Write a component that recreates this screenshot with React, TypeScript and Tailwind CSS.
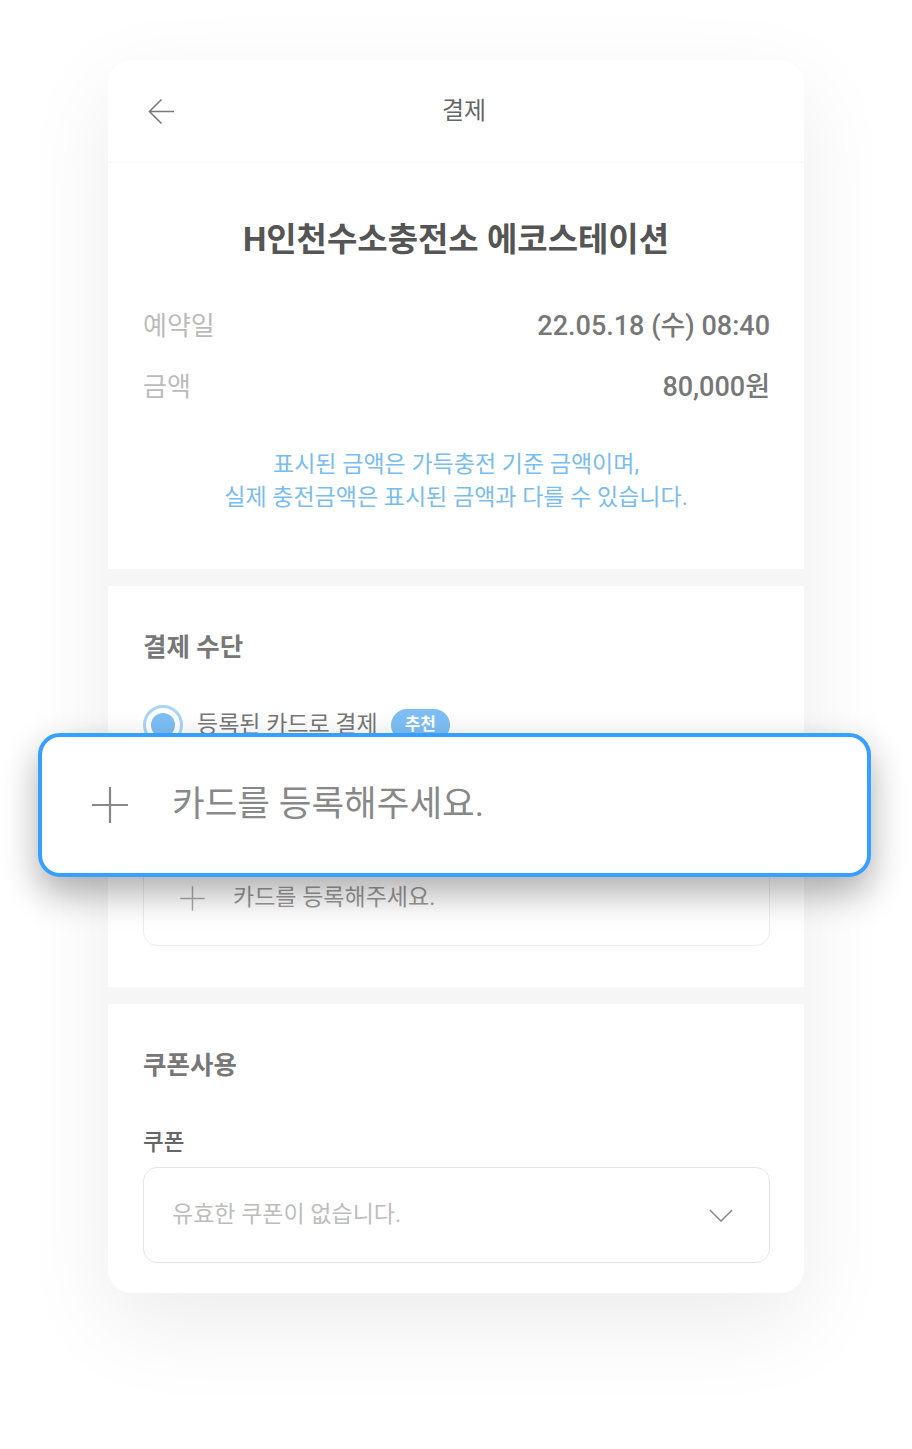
// 결제 화면 (카드 등록 강조 오버레이)
const font = "font-['Roboto','Noto_Sans_CJK_KR',sans-serif]";

function PlusIcon({ className }: { className?: string }) {
  return (
    <svg viewBox="0 0 40 40" className={className} fill="none" stroke="currentColor" strokeWidth="2.2">
      <path d="M20 2v36M2 20h36" />
    </svg>
  );
}

function BackArrow() {
  return (
    <svg viewBox="0 0 28 28" className="h-[27px] w-[27px] text-[#777]" fill="none" stroke="currentColor" strokeWidth="1.6">
      <path d="M27 14H2M14 1.5L1.5 14L14 26.5" />
    </svg>
  );
}

function ChevronDown() {
  return (
    <svg viewBox="0 0 26 14" className="h-[13px] w-[26px] text-[#888]" fill="none" stroke="currentColor" strokeWidth="1.6">
      <path d="M1 1l12 12L25 1" />
    </svg>
  );
}

export default function App() {
  return (
    <div className={`${font} relative flex h-[1449px] w-[912px] justify-center bg-white pt-[60px]`}>
      <div className="flex h-[1233px] w-[696px] flex-col gap-[17px] overflow-hidden rounded-[24px] bg-[#f6f6f6] shadow-[0_30px_90px_rgba(0,0,0,0.08)]">
        {/* 예약 정보 */}
        <section className="bg-white pb-[55px]">
          <header className="grid h-[103px] grid-cols-[1fr_auto_1fr] items-center border-b border-[#f8f8f8] px-[40px]">
            <BackArrow />
            <h1 className="pl-4 text-[24px] text-[#666]">결제</h1>
            <div />
          </header>
          <p className="mt-[57px] text-center text-[33px] font-bold leading-[40px] text-[#555]">
            H인천수소충전소 에코스테이션
          </p>
          <div className="mt-[48px] flex flex-col gap-[25px] pl-[35px] pr-[34px]">
            <div className="flex items-center justify-between leading-[36px]">
              <span className="text-[26px] text-[#bbb]">예약일</span>
              <span className="text-[27px] font-medium text-[#777]">22.05.18 (수) 08:40</span>
            </div>
            <div className="flex items-center justify-between leading-[36px]">
              <span className="text-[26px] text-[#bbb]">금액</span>
              <span className="text-[27px] font-medium text-[#777]">80,000원</span>
            </div>
          </div>
          <p className="mt-[43px] text-center text-[23px] leading-[33px] text-[#79bdee]">
            표시된 금액은 가득충전 기준 금액이며,
            <br />
            실제 충전금액은 표시된 금액과 다를 수 있습니다.
          </p>
        </section>

        {/* 결제 수단 */}
        <section className="bg-white pb-[41px] pl-[35px] pr-[34px] pt-[43px]">
          <h2 className="text-[25.5px] font-bold leading-[36px] text-[#777]">결제 수단</h2>
          <div className="mt-[40px] flex h-[40px] items-center">
            <span className="flex h-[40px] w-[40px] items-center justify-center rounded-full border-[3px] border-[#a9d5f7]">
              <span className="h-[24px] w-[24px] rounded-full bg-[#7cbef4]" />
            </span>
            <span className="ml-[14px] text-[23px] text-[#777]">등록된 카드로 결제</span>
            <span className="ml-[13px] flex h-[32px] items-center rounded-full bg-[#7dbff5] px-[14px] text-[17px] font-bold text-white">
              추천
            </span>
          </div>
          <div className="mt-[105px] flex h-[96px] items-center rounded-[14px] border border-[#ececec] px-[35px]">
            <PlusIcon className="h-[27px] w-[27px] text-[#aaa]" />
            <span className="ml-[27px] text-[23px] text-[#999]">카드를 등록해주세요.</span>
          </div>
        </section>

        {/* 쿠폰 */}
        <section className="flex-1 bg-white pl-[35px] pr-[34px] pt-[43px]">
          <h2 className="text-[25.5px] font-bold leading-[36px] text-[#777]">쿠폰사용</h2>
          <p className="mt-[43px] text-[22.5px] font-medium leading-[32px] text-[#666]">쿠폰</p>
          <div className="mt-[9px] flex h-[96px] items-center justify-between rounded-[14px] border border-[#e6e6e6] pl-[28px] pr-[35px]">
            <span className="text-[23px] text-[#bdbdbd]">유효한 쿠폰이 없습니다.</span>
            <ChevronDown />
          </div>
        </section>
      </div>

      {/* 강조 오버레이 */}
      <div className="absolute left-[38px] top-[733px] flex h-[144px] w-[833px] items-center rounded-[22px] border-4 border-[#35a0ff] bg-white pl-[48px] shadow-[0_16px_36px_rgba(0,0,0,0.32)]">
        <PlusIcon className="h-[40px] w-[40px] text-[#888]" />
        <span className="ml-[42px] text-[35.5px] text-[#888]">카드를 등록해주세요.</span>
      </div>
    </div>
  );
}
